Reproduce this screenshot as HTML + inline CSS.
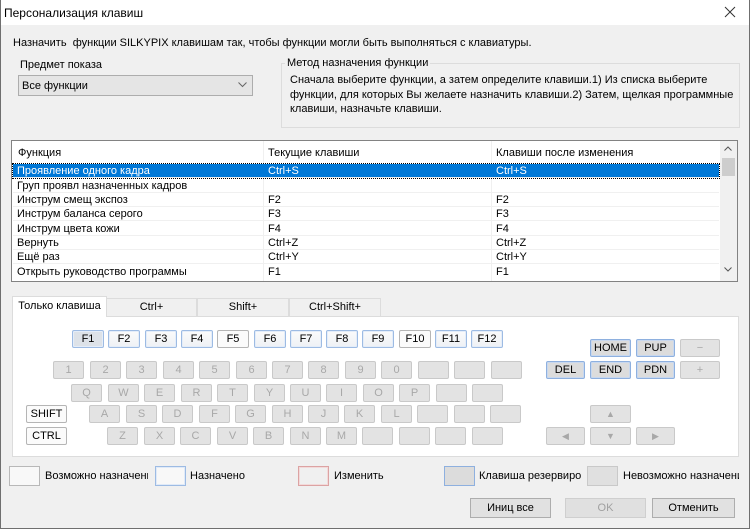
<!DOCTYPE html>
<html><head><meta charset="utf-8"><style>
*{box-sizing:border-box;margin:0;padding:0}
body{width:750px;height:529px;background:#f0f0f0;font-family:"Liberation Sans",sans-serif;font-size:11px;color:#000;position:relative;overflow:hidden}
.a{position:absolute;white-space:nowrap}
.k{position:absolute;height:18px;width:31px;border:1px solid #c9c9c9;background:#e3e3e3;color:#a8a8a8;text-align:center;line-height:16px;font-size:11px;border-radius:2px}
.f{border:1px solid #9dbbe3;background:linear-gradient(#fbfbfb,#eef1f5);color:#000;box-shadow:inset 0 0 0 1px #e4edf9;width:32px}
.p{border:1px solid #b5b5b5;background:#fbfbfb;color:#000;width:32px}
.r{border:1px solid #8eb0df;background:#dcdcdc;color:#000;box-shadow:inset 0 0 0 1px #c8d8ef}
.row{position:absolute;left:13px;width:706px;height:14px;line-height:15px;border-bottom:1px solid #f0f0f0}
.row span{position:absolute;top:0}
.btn{position:absolute;top:498px;height:20px;border:1px solid #adadad;background:#e1e1e1;text-align:center;line-height:18px}
</style></head><body>
<div class="a" style="left:0;top:0;width:750px;height:25px;background:#fff"></div>
<div class="a" style="left:4px;top:6px;font-size:12px">Персонализация клавиш</div>
<svg class="a" style="left:724px;top:6px" width="12" height="12"><path d="M1 1L11 11M11 1L1 11" stroke="#333" stroke-width="1"/></svg>
<div class="a" style="left:0;top:0;width:750px;height:529px;border:1px solid #6f6f6f;border-top:none"></div>

<div class="a" style="left:13px;top:37px">Назначить&nbsp; функции SILKYPIX клавишам так, чтобы функции могли быть выполняться с клавиатуры.</div>
<div class="a" style="left:20px;top:59px">Предмет показа</div>
<div class="a" style="left:18px;top:75px;width:235px;height:21px;border:1px solid #adadad;background:#e5e5e5"></div>
<div class="a" style="left:22px;top:80px">Все функции</div>
<svg class="a" style="left:238px;top:82px" width="9" height="6"><path d="M0.5 0.5L4.5 4.5L8.5 0.5" stroke="#666" fill="none"/></svg>
<div class="a" style="left:281px;top:63px;width:459px;height:65px;border:1px solid #dcdcdc"></div>
<div class="a" style="left:285px;top:57px;background:#f0f0f0;padding:0 2px">Метод назначения функции</div>
<div class="a" style="left:290px;top:73px;line-height:14.5px">Сначала выберите функции, а затем определите клавиши.1) Из списка выберите<br>функции, для которых Вы желаете назначить клавиши.2) Затем, щелкая программные<br>клавиши, назначьте клавиши.</div>

<div class="a" style="left:11px;top:140px;width:727px;height:142px;border:1px solid #828282;background:#fff"></div>
<div class="a" style="left:720px;top:141px;width:17px;height:140px;background:#f0f0f0"></div>
<div class="a" style="left:722px;top:158px;width:13px;height:18px;background:#cdcdcd"></div>
<svg class="a" style="left:724px;top:146px" width="8" height="5"><path d="M0.5 4.5L4 1L7.5 4.5" stroke="#555" fill="none"/></svg>
<svg class="a" style="left:724px;top:267px" width="8" height="5"><path d="M0.5 0.5L4 4L7.5 0.5" stroke="#555" fill="none"/></svg>
<div class="a" style="left:263px;top:141px;width:1px;height:140px;background:#f0f0f0"></div>
<div class="a" style="left:491px;top:141px;width:1px;height:140px;background:#f0f0f0"></div>
<div class="a" style="left:18px;top:147px">Функция</div>
<div class="a" style="left:268px;top:147px">Текущие клавиши</div>
<div class="a" style="left:496px;top:147px">Клавиши после изменения</div>
<div class="row" style="top:164px;background:#0078d7;color:#fff;outline:1px dotted #000"><span style="left:4px">Проявление одного кадра</span><span style="left:255px">Ctrl+S</span><span style="left:483px">Ctrl+S</span></div>
<div class="row" style="top:178.5px"><span style="left:4px">Груп проявл назначенных кадров</span></div>
<div class="row" style="top:193px"><span style="left:4px">Инструм смещ экспоз</span><span style="left:255px">F2</span><span style="left:483px">F2</span></div>
<div class="row" style="top:207px"><span style="left:4px">Инструм баланса серого</span><span style="left:255px">F3</span><span style="left:483px">F3</span></div>
<div class="row" style="top:221.5px"><span style="left:4px">Инструм цвета кожи</span><span style="left:255px">F4</span><span style="left:483px">F4</span></div>
<div class="row" style="top:236px"><span style="left:4px">Вернуть</span><span style="left:255px">Ctrl+Z</span><span style="left:483px">Ctrl+Z</span></div>
<div class="row" style="top:250px"><span style="left:4px">Ещё раз</span><span style="left:255px">Ctrl+Y</span><span style="left:483px">Ctrl+Y</span></div>
<div class="row" style="top:264.5px;border:none"><span style="left:4px">Открыть руководство программы</span><span style="left:255px">F1</span><span style="left:483px">F1</span></div>

<div class="a" style="left:12px;top:316px;width:727px;height:141px;border:1px solid #dcdcdc;background:#fff"></div>
<div class="a" style="left:106px;top:298px;width:91px;height:19px;border:1px solid #dcdcdc;background:#f0f0f0;text-align:center;line-height:17px">Ctrl+</div>
<div class="a" style="left:197px;top:298px;width:92px;height:19px;border:1px solid #dcdcdc;background:#f0f0f0;text-align:center;line-height:17px">Shift+</div>
<div class="a" style="left:289px;top:298px;width:92px;height:19px;border:1px solid #dcdcdc;background:#f0f0f0;text-align:center;line-height:17px">Ctrl+Shift+</div>
<div class="a" style="left:12px;top:296px;width:95px;height:21px;border:1px solid #dcdcdc;border-bottom:none;background:#fff;text-align:center;line-height:19px">Только клавиша</div>

<div class="k f" style="left:72px;top:330px;background:#dde2e8">F1</div>
<div class="k f" style="left:108px;top:330px">F2</div>
<div class="k f" style="left:145px;top:330px">F3</div>
<div class="k f" style="left:181px;top:330px">F4</div>
<div class="k p" style="left:217px;top:330px">F5</div>
<div class="k f" style="left:254px;top:330px">F6</div>
<div class="k f" style="left:290px;top:330px">F7</div>
<div class="k f" style="left:326px;top:330px">F8</div>
<div class="k f" style="left:362px;top:330px">F9</div>
<div class="k p" style="left:399px;top:330px">F10</div>
<div class="k f" style="left:435px;top:330px">F11</div>
<div class="k f" style="left:471px;top:330px">F12</div>

<div class="k" style="left:53px;top:361px">1</div><div class="k" style="left:90px;top:361px">2</div><div class="k" style="left:126px;top:361px">3</div><div class="k" style="left:163px;top:361px">4</div><div class="k" style="left:199px;top:361px">5</div><div class="k" style="left:236px;top:361px">6</div><div class="k" style="left:272px;top:361px">7</div><div class="k" style="left:308px;top:361px">8</div><div class="k" style="left:345px;top:361px">9</div><div class="k" style="left:381px;top:361px">0</div><div class="k" style="left:418px;top:361px"></div><div class="k" style="left:454px;top:361px"></div><div class="k" style="left:491px;top:361px"></div>

<div class="k" style="left:71px;top:384px">Q</div><div class="k" style="left:108px;top:384px">W</div><div class="k" style="left:144px;top:384px">E</div><div class="k" style="left:181px;top:384px">R</div><div class="k" style="left:217px;top:384px">T</div><div class="k" style="left:254px;top:384px">Y</div><div class="k" style="left:290px;top:384px">U</div><div class="k" style="left:326px;top:384px">I</div><div class="k" style="left:363px;top:384px">O</div><div class="k" style="left:399px;top:384px">P</div><div class="k" style="left:436px;top:384px"></div><div class="k" style="left:472px;top:384px"></div>

<div class="k p" style="left:26px;top:405px;width:41px">SHIFT</div>
<div class="k" style="left:89px;top:405px">A</div><div class="k" style="left:126px;top:405px">S</div><div class="k" style="left:162px;top:405px">D</div><div class="k" style="left:199px;top:405px">F</div><div class="k" style="left:235px;top:405px">G</div><div class="k" style="left:272px;top:405px">H</div><div class="k" style="left:308px;top:405px">J</div><div class="k" style="left:344px;top:405px">K</div><div class="k" style="left:381px;top:405px">L</div><div class="k" style="left:417px;top:405px"></div><div class="k" style="left:454px;top:405px"></div><div class="k" style="left:490px;top:405px"></div>

<div class="k p" style="left:26px;top:427px;width:41px">CTRL</div>
<div class="k" style="left:107px;top:427px">Z</div><div class="k" style="left:144px;top:427px">X</div><div class="k" style="left:180px;top:427px">C</div><div class="k" style="left:217px;top:427px">V</div><div class="k" style="left:253px;top:427px">B</div><div class="k" style="left:290px;top:427px">N</div><div class="k" style="left:326px;top:427px">M</div><div class="k" style="left:362px;top:427px"></div><div class="k" style="left:399px;top:427px"></div><div class="k" style="left:435px;top:427px"></div><div class="k" style="left:472px;top:427px"></div>

<div class="k r" style="left:590px;top:339px;width:41px">HOME</div>
<div class="k r" style="left:636px;top:339px;width:39px">PUP</div>
<div class="k" style="left:680px;top:339px;width:40px">−</div>
<div class="k r" style="left:546px;top:361px;width:39px">DEL</div>
<div class="k r" style="left:590px;top:361px;width:41px">END</div>
<div class="k r" style="left:636px;top:361px;width:39px">PDN</div>
<div class="k" style="left:680px;top:361px;width:40px">+</div>
<div class="k" style="left:590px;top:405px;width:41px;font-size:9px">▲</div>
<div class="k" style="left:546px;top:427px;width:39px;font-size:9px">◀</div>
<div class="k" style="left:590px;top:427px;width:41px;font-size:9px">▼</div>
<div class="k" style="left:636px;top:427px;width:39px;font-size:9px">▶</div>

<div class="a" style="left:9px;top:466px;width:31px;height:20px;border:1px solid #b8b8b8;background:#f8f8f8"></div>
<div class="a" style="left:45px;top:470px;width:103px;overflow:hidden">Возможно назначение</div>
<div class="a" style="left:155px;top:466px;width:31px;height:20px;border:1px solid #9dbbe3;background:#f8f8f8;box-shadow:inset 0 0 0 1px #e0eaf8"></div>
<div class="a" style="left:190px;top:470px">Назначено</div>
<div class="a" style="left:298px;top:466px;width:31px;height:20px;border:1px solid #dca3a3;background:#f0f0f0;box-shadow:inset 0 0 0 1px #f3dada"></div>
<div class="a" style="left:334px;top:470px">Изменить</div>
<div class="a" style="left:444px;top:466px;width:31px;height:20px;border:1px solid #8eb0df;background:#dcdcdc"></div>
<div class="a" style="left:479px;top:470px;width:102px;overflow:hidden">Клавиша резервирования</div>
<div class="a" style="left:587px;top:466px;width:31px;height:20px;border:1px solid #c9c9c9;background:#e0e0e0"></div>
<div class="a" style="left:623px;top:470px;width:116px;overflow:hidden">Невозможно назначение</div>

<div class="btn" style="left:470px;width:81px">Иниц все</div>
<div class="btn" style="left:565px;width:81px;border-color:#cfcfcf;background:#e0e0e0;color:#a0a0a0">OK</div>
<div class="btn" style="left:652px;width:83px">Отменить</div>
</body></html>
